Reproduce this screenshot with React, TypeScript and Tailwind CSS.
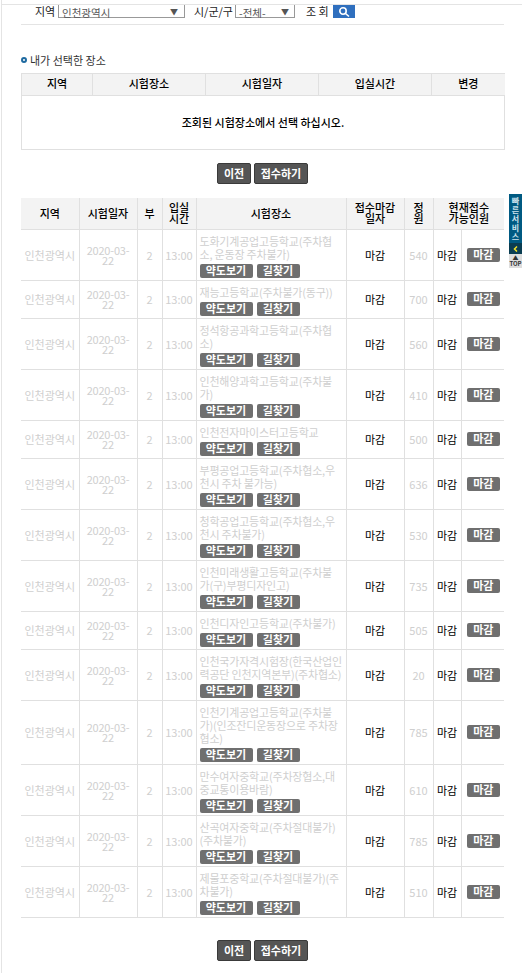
const font = { fontFamily: '"Noto Sans CJK KR","Noto Sans",sans-serif' };

type Row = { place: string[]; cap: string };
const rows: Row[] = [
  { place: ["도화기계공업고등학교(주차협", "소, 운동장 주차불가)"], cap: "540" },
  { place: ["재능고등학교(주차불가(동구))"], cap: "700" },
  { place: ["정석항공과학고등학교(주차협", "소)"], cap: "560" },
  { place: ["인천해양과학고등학교(주차불", "가)"], cap: "410" },
  { place: ["인천전자마이스터고등학교"], cap: "500" },
  { place: ["부평공업고등학교(주차협소,우", "천시 주차 불가능)"], cap: "636" },
  { place: ["청학공업고등학교(주차협소,우", "천시 주차불가)"], cap: "530" },
  { place: ["인천미래생활고등학교(주차불", "가(구)부평디자인고)"], cap: "735" },
  { place: ["인천디자인고등학교(주차불가)"], cap: "505" },
  { place: ["인천국가자격시험장(한국산업인", "력공단 인천지역본부)(주차협소)"], cap: "20" },
  { place: ["인천기계공업고등학교(주차불", "가)(인조잔디운동장으로 주차장", "협소)"], cap: "785" },
  { place: ["만수여자중학교(주차장협소,대", "중교통이용바람)"], cap: "610" },
  { place: ["산곡여자중학교(주차절대불가)", "(주차불가)"], cap: "785" },
  { place: ["제물포중학교(주차절대불가)(주", "차불가)"], cap: "510" },
];

function DarkButton({ children, className }: { children: string; className: string }) {
  return (
    <button className={`h-[21px] rounded-[2px] border border-[#3a3a3a] bg-[#555555] text-[11px] leading-[17px] font-bold text-white ${className}`}>
      {children}
    </button>
  );
}

function SmallButton({ children, className }: { children: string; className: string }) {
  return (
    <span className={`inline-block h-[14px] rounded-[2px] bg-[#6f6f6f] text-center text-[11px] leading-[13px] font-bold text-white ${className}`}>
      {children}
    </span>
  );
}

function Actions() {
  return (
    <div className="flex justify-center gap-[3px]">
      <DarkButton className="w-[34px]">이전</DarkButton>
      <DarkButton className="w-[54px]">접수하기</DarkButton>
    </div>
  );
}

export default function App() {
  return (
    <div className="relative h-[973px] w-[522px] overflow-hidden bg-white text-[11px] text-black" style={font}>
      <div className="ml-px h-[973px] border-l border-[#e4e4e4] pt-[4px]">
        <div className="h-px bg-[#e4e4e4]" />
        <div className="ml-[19px] w-[483px]">
          <div className="flex h-[19px] items-start text-[#222]">
            <span className="ml-[14px] w-[23px] leading-[12px]">지역</span>
            <div className="flex h-[13px] w-[127px] items-center justify-between border-r border-b border-l border-[#999] pr-[6px] pl-[3px] text-[10.5px] leading-[13px] text-[#555]">
              <span className="pt-[2px]">인천광역시</span>
              <span className="text-[8px] text-[#555]">▼</span>
            </div>
            <span className="ml-[9px] w-[41px] leading-[12px]">시/군/구</span>
            <div className="flex h-[13px] w-[60px] items-center justify-between border-r border-b border-l border-[#999] pr-[5px] pl-[3px] text-[10.5px] leading-[13px] text-[#555]">
              <span className="pt-[2px]">-전체-</span>
              <span className="text-[8px] text-[#555]">▼</span>
            </div>
            <span className="ml-[11px] w-[27px] leading-[12px]">조 회</span>
            <div className="flex h-[13px] w-[22px] items-center justify-center bg-[#2f6fbe]">
              <svg width="12" height="12" viewBox="0 0 12 12" fill="none" stroke="white" strokeWidth="1.6">
                <circle cx="5" cy="5" r="3.2" />
                <path d="M7.5 7.5l3.5 3" />
              </svg>
            </div>
          </div>
          <div className="h-px bg-[#e4e4e4]" />

          <div className="mt-[29px] flex h-[12px] items-center gap-[3px] text-[11px] leading-[12px] text-[#333]">
            <span className="h-[6px] w-[6px] rounded-full border-2 border-[#1f6aa0]" />
            <span>내가 선택한 장소</span>
          </div>

          <table className="mt-[7px] w-[483px] table-fixed border-collapse">
            <colgroup>
              <col className="w-[71px]" />
              <col className="w-[113px]" />
              <col className="w-[113px]" />
              <col className="w-[113px]" />
              <col className="w-[73px]" />
            </colgroup>
            <thead>
              <tr className="h-[22px] bg-[#f3f3f3] text-[11px] leading-[13px] font-medium">
                {["지역", "시험장소", "시험일자", "입실시간", "변경"].map((h, i) => (
                  <th key={h} className={`border-t border-b border-[#e0e0e0] pb-[3px] font-medium ${i < 4 ? "border-r" : ""} ${i === 0 ? "border-l" : ""}`}>
                    {h}
                  </th>
                ))}
              </tr>
            </thead>
            <tbody>
              <tr className="h-[54px]">
                <td colSpan={5} className="border border-[#e0e0e0] text-center text-[11px] font-medium">
                  조회된 시험장소에서 선택 하십시오.
                </td>
              </tr>
            </tbody>
          </table>

          <div className="mt-[13px]">
            <Actions />
          </div>

          <table className="mt-[14px] w-[483px] table-fixed border-collapse">
            <colgroup>
              <col className="w-[58px]" />
              <col className="w-[58px]" />
              <col className="w-[25px]" />
              <col className="w-[34px]" />
              <col className="w-[150px]" />
              <col className="w-[58px]" />
              <col className="w-[29px]" />
              <col className="w-[28px]" />
              <col className="w-[43px]" />
            </colgroup>
            <thead>
              <tr className="h-[31px] bg-[#f3f3f3] text-center text-[11px] leading-[11px]">
                <th className="border-r border-b border-[#e0e0e0] font-medium">지역</th>
                <th className="border-r border-b border-[#e0e0e0] font-medium">시험일자</th>
                <th className="border-r border-b border-[#e0e0e0] font-medium">부</th>
                <th className="border-r border-b border-[#e0e0e0] font-medium">입실<br />시간</th>
                <th className="border-r border-b border-[#e0e0e0] font-medium">시험장소</th>
                <th className="border-r border-b border-[#e0e0e0] font-medium">접수마감<br />일자</th>
                <th className="border-r border-b border-[#e0e0e0] font-medium">정<br />원</th>
                <th colSpan={2} className="border-b border-[#e0e0e0] font-medium">현재접수<br />가능인원</th>
              </tr>
            </thead>
            <tbody>
              {rows.map((r, i) => (
                <tr key={i} className="text-center text-[11px] leading-[10px]">
                  <td className="border-r border-b border-[#e0e0e0] text-[#cfcfcf]">인천광역시</td>
                  <td className="border-r border-b border-[#e0e0e0] px-[2px] tracking-[-0.2px] text-[#cfcfcf]">2020-03-<br />22</td>
                  <td className="border-r border-b border-[#e0e0e0] text-[#cfcfcf]">2</td>
                  <td className="border-r border-b border-[#e0e0e0] text-[#cfcfcf]">13:00</td>
                  <td className="border-r border-b border-[#e0e0e0] pt-[5px] pr-0 pb-[2px] pl-[3px] text-left tracking-[-0.2px] whitespace-nowrap">
                    {r.place.map((line) => (
                      <div key={line} className="h-[13px] overflow-visible leading-[13px] text-[#cfcfcf]">{line}</div>
                    ))}
                    <div className="mt-[3px] flex gap-[4px] tracking-normal">
                      <SmallButton className="w-[53px]">약도보기</SmallButton>
                      <SmallButton className="w-[43px]">길찾기</SmallButton>
                    </div>
                  </td>
                  <td className="border-r border-b border-[#e0e0e0]">마감</td>
                  <td className="border-r border-b border-[#e0e0e0] text-[#cfcfcf]">{r.cap}</td>
                  <td className="border-r border-b border-[#e0e0e0]">마감</td>
                  <td className="border-b border-[#e0e0e0] pl-[1px]">
                    <SmallButton className="w-[33px]">마감</SmallButton>
                  </td>
                </tr>
              ))}
            </tbody>
          </table>

          <div className="mt-[22px]">
            <Actions />
          </div>
        </div>
      </div>

      <div className="absolute top-[194px] left-[509px] flex w-[13px] flex-col items-center">
        <div className="flex h-[49px] w-full flex-col items-center justify-center bg-[#005a82] text-[8px] leading-[9px] font-bold text-[#cfe4ee]">
          <span>빠</span><span>른</span><span>서</span><span>비</span><span>스</span>
        </div>
        <div className="flex h-[11px] w-full items-center justify-center bg-[#0a3d52]">
          <svg width="5" height="6" viewBox="0 0 5 6" fill="none" stroke="#f2e22a" strokeWidth="1.5"><path d="M4 0.5L1.5 3 4 5.5" /></svg>
        </div>
        <div className="flex h-[14px] w-full flex-col items-center justify-center bg-[#dddddd] text-[6px] leading-[6px] font-bold text-[#333]">
          <span>▲</span><span>TOP</span>
        </div>
      </div>
    </div>
  );
}
